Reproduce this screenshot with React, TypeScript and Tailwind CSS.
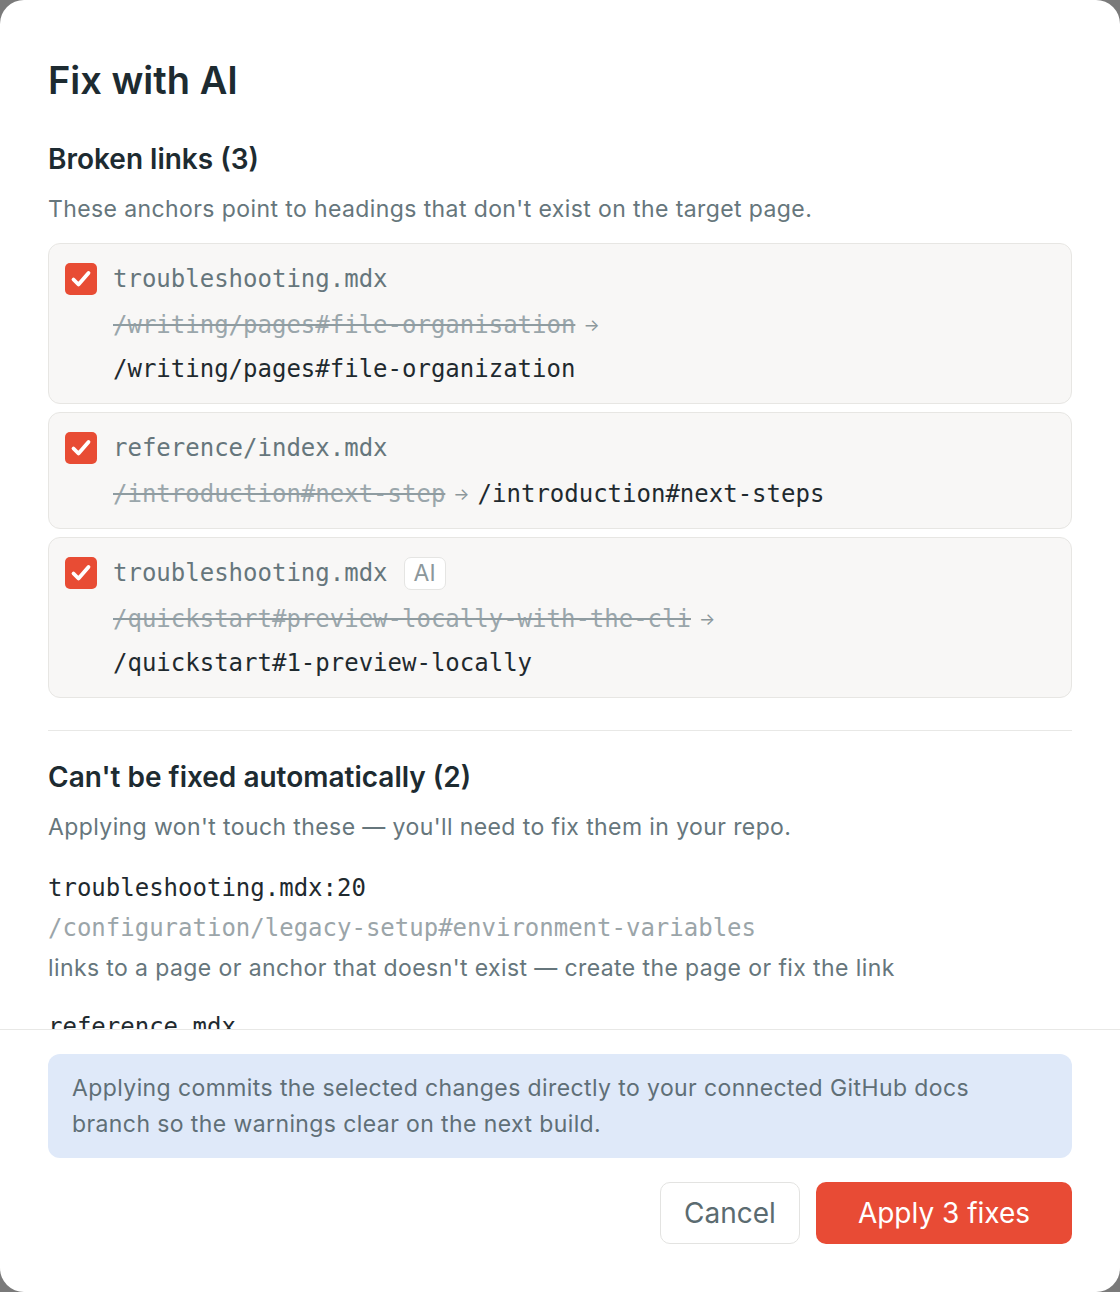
const SANS = "font-['Inter','Noto_Sans',sans-serif]";
const MONO = "font-['DejaVu_Sans_Mono','Liberation_Mono',monospace]";

const FIXES = [
  {
    file: "troubleshooting.mdx",
    from: "/writing/pages#file-organisation",
    to: "/writing/pages#file-organization",
    ai: false,
  },
  {
    file: "reference/index.mdx",
    from: "/introduction#next-step",
    to: "/introduction#next-steps",
    ai: false,
  },
  {
    file: "troubleshooting.mdx",
    from: "/quickstart#preview-locally-with-the-cli",
    to: "/quickstart#1-preview-locally",
    ai: true,
  },
];

const MANUAL = [
  {
    where: "troubleshooting.mdx:20",
    link: "/configuration/legacy-setup#environment-variables",
    note: "links to a page or anchor that doesn't exist — create the page or fix the link",
  },
  {
    where: "reference.mdx",
    link: "/api/overview#authentication",
    note: "links to a page or anchor that doesn't exist — create the page or fix the link",
  },
];

function Checkbox() {
  return (
    <div className="flex h-[32px] w-[32px] items-center justify-center rounded-[5px] bg-[#e84c34]">
      <svg width="24" height="24" viewBox="0 0 24 24" fill="none">
        <path
          d="M4.5 12.5 L9.5 17.5 L19.5 6"
          stroke="white"
          strokeWidth="3.8"
          strokeLinecap="round"
          strokeLinejoin="round"
        />
      </svg>
    </div>
  );
}

export default function App() {
  return (
    <div className={`h-[1292px] w-[1120px] bg-[#7a7a7a] ${SANS}`}>
      <div className="flex h-full w-full flex-col overflow-hidden rounded-[24px] bg-white">
        {/* scrolling body */}
        <div className="flex-1 overflow-hidden px-12 pt-[58px]">
          <h1 className="text-[38px] font-semibold leading-[44px] text-[#1d2b31]">
            Fix with AI
          </h1>

          <h2 className="mt-[39px] text-[28px] font-semibold leading-[36px] text-[#1d2b31]">
            Broken links (3)
          </h2>
          <p className="mt-4 text-[23px] leading-[32px] tracking-[0.4px] text-[#66767c]">
            These anchors point to headings that don't exist on the target page.
          </p>

          <div className="mt-[18px] flex flex-col gap-2">
            {FIXES.map((f, i) => (
              <div
                key={i}
                className="flex gap-4 rounded-[12px] border border-[#e7e6e3] bg-[#f8f7f6] px-4 pb-[12px] pt-[13px]"
              >
                <div className="flex h-[44px] items-center">
                  <Checkbox />
                </div>
                <div className="min-w-0 flex-1">
                  <div className="flex h-[44px] items-center gap-4">
                    <span className={`${MONO} text-[24px] text-[#66767c]`}>{f.file}</span>
                    {f.ai && (
                      <span className="flex h-[33px] items-center rounded-[7px] border border-[#e5e5e3] bg-white px-[9px] text-[23px] text-[#8c979b]">
                        AI
                      </span>
                    )}
                  </div>
                  <div className="mt-[2px] flex flex-wrap items-center gap-x-2 leading-[44px]">
                    <span
                      className={`${MONO} whitespace-nowrap text-[24px] text-[#9aa6ab] line-through decoration-[#8f9ca1]`}
                    >
                      {f.from}
                    </span>
                    <span className="text-[17px] text-[#8c979b]">→</span>
                    <span className={`${MONO} whitespace-nowrap text-[24px] text-[#1f2a2f]`}>
                      {f.to}
                    </span>
                  </div>
                </div>
              </div>
            ))}
          </div>

          <div className="mt-8 border-t border-[#e8e8e6]" />

          <h2 className="mt-[28px] text-[28px] font-semibold leading-[36px] text-[#1d2b31]">
            Can't be fixed automatically (2)
          </h2>
          <p className="mt-4 text-[23px] leading-[32px] tracking-[0.4px] text-[#66767c]">
            Applying won't touch these — you'll need to fix them in your repo.
          </p>

          <div className="mt-[25px] flex flex-col gap-[19px]">
            {MANUAL.map((m, i) => (
              <div key={i} className="leading-[40px]">
                <div className={`${MONO} text-[24px] text-[#1f2a2f]`}>{m.where}</div>
                <div className={`${MONO} text-[24px] text-[#9ba5a9]`}>{m.link}</div>
                <div className="text-[23px] tracking-[0.4px] text-[#66767c]">{m.note}</div>
              </div>
            ))}
          </div>
        </div>

        {/* footer */}
        <div className="border-t border-[#e8e8e6] px-12 pb-12 pt-6">
          <div className="rounded-[12px] bg-[#dfe9f9] px-6 py-4 text-[23px] leading-[36px] tracking-[0.4px] text-[#5f6f77]">
            Applying commits the selected changes directly to your connected GitHub docs branch
            so the warnings clear on the next build.
          </div>
          <div className="mt-6 flex justify-end gap-4">
            <button className="h-[62px] w-[140px] rounded-[10px] border border-[#e3e3e1] bg-white text-[28px] text-[#5b6b70]">
              Cancel
            </button>
            <button className="h-[62px] w-[256px] rounded-[10px] bg-[#e84b35] text-[28px] text-white">
              Apply 3 fixes
            </button>
          </div>
        </div>
      </div>
    </div>
  );
}
